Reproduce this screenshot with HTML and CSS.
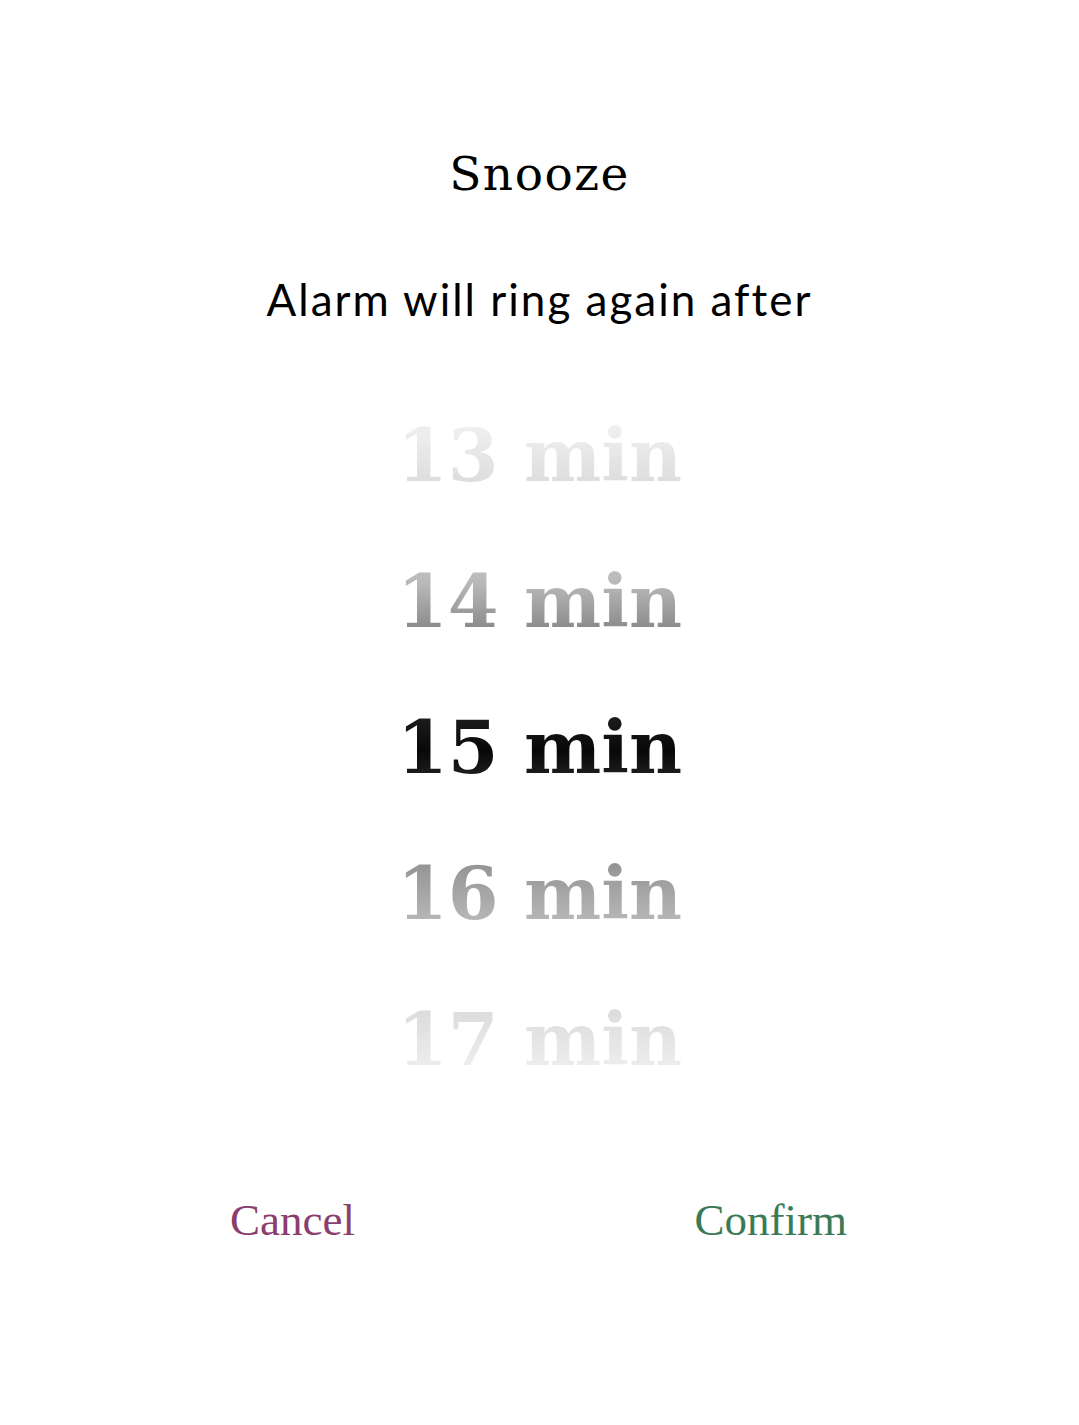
FILE: index.html
```html
<!DOCTYPE html>
<html lang="en">
<head>
<meta charset="utf-8">
<title>Snooze</title>
<link rel="stylesheet" href="styles.css">
</head>
<body>
<main class="dialog">
  <h1 class="title">Snooze</h1>
  <p class="subtitle">Alarm will ring again after</p>
  <ul class="picker">
    <li class="item"><span class="val far-top">13 min</span></li>
    <li class="item"><span class="val near-top">14 min</span></li>
    <li class="item"><span class="val selected">15 min</span></li>
    <li class="item"><span class="val near-bottom">16 min</span></li>
    <li class="item"><span class="val far-bottom">17 min</span></li>
  </ul>
  <div class="actions">
    <button class="btn cancel">Cancel</button>
    <button class="btn confirm">Confirm</button>
  </div>
</main>
</body>
</html>
```
FILE: styles.css
```css
html, body {
  margin: 0;
  padding: 0;
  background: #ffffff;
}
.dialog {
  display: flex;
  flex-direction: column;
  align-items: stretch;
  padding-top: 144px;
}
.title {
  margin: 0;
  text-align: center;
  font-family: "DejaVu Serif", serif;
  font-weight: normal;
  font-size: 47px;
  line-height: 60px;
  letter-spacing: 1.5px;
  color: #000;
}
.subtitle {
  margin: 65px 0 0;
  text-align: center;
  font-family: Lato, "Noto Sans", sans-serif;
  font-size: 44px;
  line-height: 60px;
  letter-spacing: 2px;
  color: #000;
}
.picker {
  list-style: none;
  margin: 53px 0 0;
  padding: 0;
}
.item {
  height: 146px;
  line-height: 146px;
  text-align: center;
  font-family: "DejaVu Serif", serif;
  font-weight: bold;
  font-size: 73px;
}
.val {
  -webkit-background-clip: text;
  background-clip: text;
  color: transparent;
  padding: 0 2px;
}
.far-top {
  background-image: linear-gradient(to bottom, #f2f2f2 0%, #ececec 30%, #dcdcdc 85%, #dcdcdc 100%);
}
.near-top {
  background-image: linear-gradient(to bottom, #c4c4c4 0%, #b8b8b8 30%, #888888 85%, #888888 100%);
}
.selected {
  background-image: linear-gradient(to bottom, #2a2a2a 0%, #1a1a1a 20%, #080808 55%, #202020 85%, #222222 100%);
}
.near-bottom {
  background-image: linear-gradient(to bottom, #8a8a8a 0%, #999999 25%, #b8b8b8 85%, #bbbbbb 100%);
}
.far-bottom {
  background-image: linear-gradient(to bottom, #d8d8d8 0%, #dedede 25%, #eeeeee 85%, #f0f0f0 100%);
}
.actions {
  display: flex;
  justify-content: space-between;
  margin-top: 78px;
  padding: 0 232px 0 230px;
}
.btn {
  border: 0;
  background: none;
  padding: 0;
  margin: 0;
  font-family: "Liberation Serif", serif;
  font-size: 45px;
  line-height: 60px;
  cursor: pointer;
}
.cancel {
  color: #8b3d6d;
}
.confirm {
  color: #3b7a56;
}
```
